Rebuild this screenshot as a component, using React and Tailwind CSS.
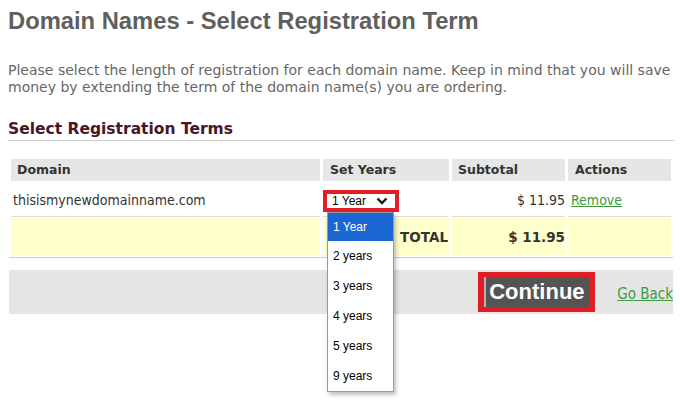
import React from 'react';

const body = { fontFamily: '"DejaVu Sans Condensed", "DejaVu Sans", sans-serif' };
const bold = { fontFamily: '"DejaVu Sans", sans-serif' };
const arial = { fontFamily: '"Liberation Sans", Arial, sans-serif' };

const years = ['1 Year', '2 years', '3 years', '4 years', '5 years', '9 years'];

function YearSelect() {
  return (
    <div className="relative w-[76px] h-[22px] border-[4px] border-[#e11d25] bg-white">
      <div className="flex items-center h-full pl-[5px] text-[12px] text-black leading-none" style={arial}>
        <span>1 Year</span>
        <svg className="ml-[10px]" width="12" height="8" viewBox="0 0 12 8">
          <path d="M1.5 1.5 L6 6 L10.5 1.5" fill="none" stroke="#111" strokeWidth="2.4" />
        </svg>
      </div>
      {/* open options list */}
      <div className="absolute top-[calc(100%+4px)] left-0 w-[67px] bg-white border border-[#9a9a9a] shadow-[2px_3px_4px_rgba(0,0,0,0.25)] z-10" style={arial}>
        {years.map((y, i) => (
          <div
            key={y}
            className={`flex items-center pl-[5px] text-[12px] ${i === 0 ? 'h-[28px] bg-[#1a66d2] text-white' : 'h-[30px] text-black'}`}
          >
            {y}
          </div>
        ))}
      </div>
    </div>
  );
}

export default function App() {
  return (
    <div className="w-[680px] h-[410px] bg-white overflow-hidden" style={body}>
      <div className="pl-[8px] w-[674px]">
        <h1 className="mt-[7px] text-[23.75px] leading-[28px] font-bold text-[#5f5f5f]" style={arial}>
          Domain Names - Select Registration Term
        </h1>

        <p className="mt-[27px] text-[14px] leading-[17px] text-[#666]" style={bold}>
          Please select the length of registration for each domain name. Keep in mind that you will save
          money by extending the term of the domain name(s) you are ordering.
        </p>

        <h2 className="mt-[24px] text-[15.5px] leading-[18px] font-bold text-[#4a1526]" style={bold}>
          Select Registration Terms
        </h2>
        <div className="mt-[2px] h-px bg-[#cccccc]" />

        {/* table */}
        <div className="mt-[18px] pl-[3px]">
          <div className="grid grid-cols-[309px_126px_113px_103px] gap-x-[3px] text-[12.5px] font-bold text-[#333]" style={bold}>
            <div className="h-[22px] bg-[#e6e6e6] flex items-center pl-[6px]">Domain</div>
            <div className="h-[22px] bg-[#e6e6e6] flex items-center pl-[7px]">Set Years</div>
            <div className="h-[22px] bg-[#e6e6e6] flex items-center pl-[6px]">Subtotal</div>
            <div className="h-[22px] bg-[#e6e6e6] flex items-center pl-[7px]">Actions</div>
          </div>

          <div className="grid grid-cols-[309px_126px_113px_103px] gap-x-[3px] text-[14px] text-[#333]">
            <div className="h-[36px] border-b border-[#dcdcdc] flex items-center pl-[2px] pt-[3px]">thisismynewdomainname.com</div>
            <div className="h-[36px] border-b border-[#dcdcdc] flex items-center pt-[5px]">
              <YearSelect />
            </div>
            <div className="h-[36px] border-b border-[#dcdcdc] flex items-center justify-end pt-[3px]">$ 11.95</div>
            <div className="h-[36px] border-b border-[#dcdcdc] flex items-center pl-[3px] pt-[3px]">
              <a href="#" className="text-[#3d9b3d] underline">Remove</a>
            </div>
          </div>

          <div className="mt-[1px] grid grid-cols-[309px_126px_113px_103px] gap-x-[3px] text-[13.5px] font-bold text-[#333]" style={bold}>
            <div className="h-[38px] bg-[#ffffcc]" />
            <div className="h-[38px] bg-[#ffffcc] flex items-center justify-end pr-[1px]">TOTAL</div>
            <div className="h-[38px] bg-[#ffffcc] flex items-center justify-end">$ 11.95</div>
            <div className="h-[38px] bg-[#ffffcc]" />
          </div>
        </div>
        <div className="mt-[1px] ml-[1px] w-[664px] h-px bg-[#cccccc]" />

        {/* buttons bar */}
        <div className="mt-[12px] ml-[1px] w-[664px] h-[44px] bg-[#e5e5e5] flex items-center justify-end gap-[22px]">
          <div className="border-x-[6px] border-y-[5px] border-[#e11d25]">
            <button
              className="w-[105px] h-[30px] bg-[#545454] border-l-2 border-[#b4b4b4] text-white text-[22px] font-bold leading-none pl-[3px] text-left"
              style={arial}
            >
              Continue
            </button>
          </div>
          <a href="#" className="pt-[4px] text-[15px] text-[#3d9b3d] underline">Go Back</a>
        </div>
      </div>
    </div>
  );
}
